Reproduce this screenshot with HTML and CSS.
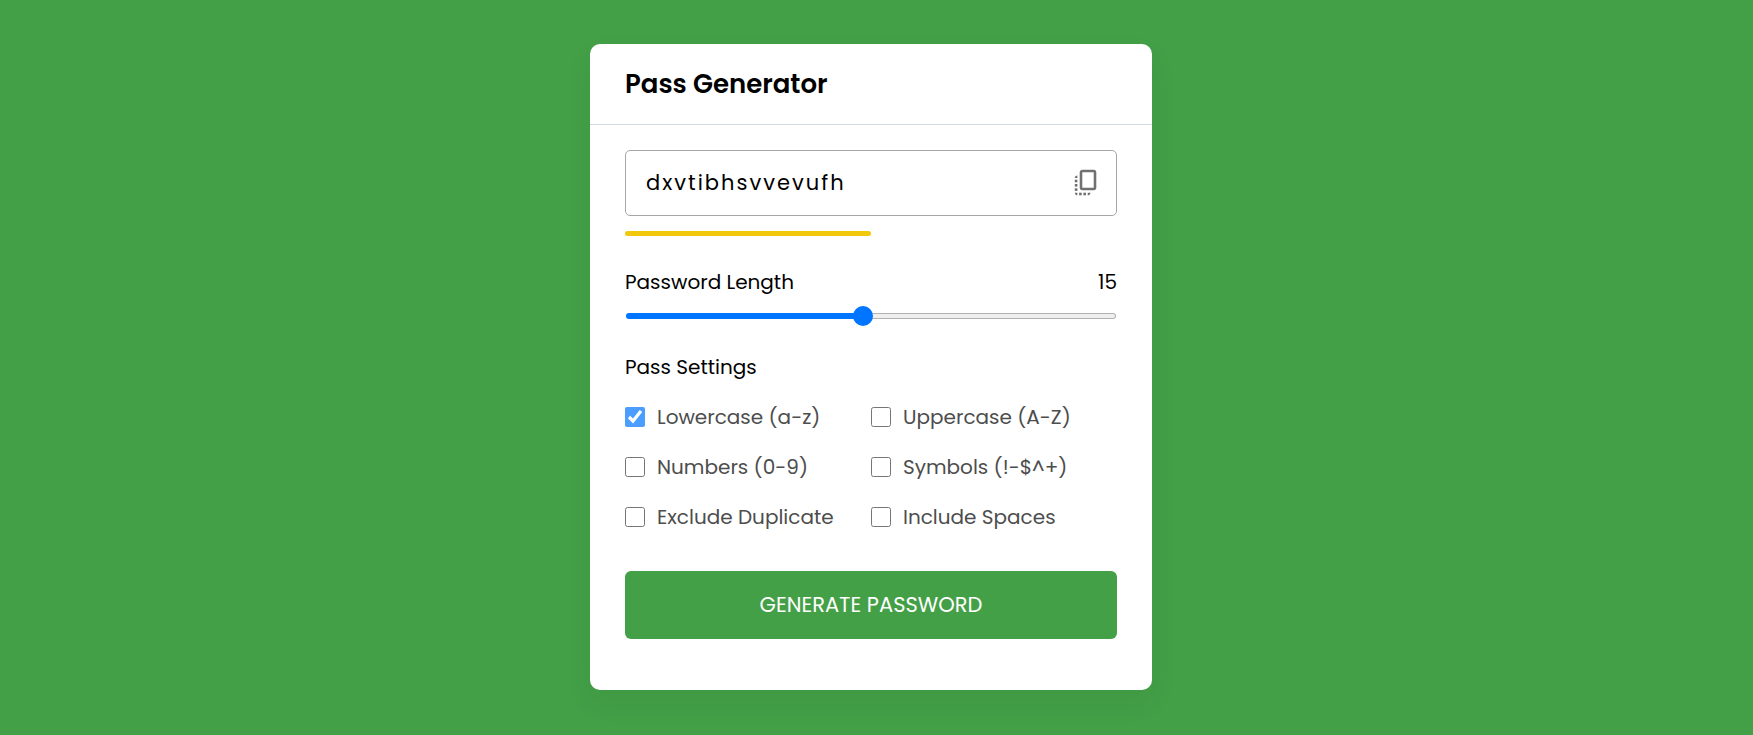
FILE: index.html
```html
<!DOCTYPE html>
<html lang="en">
<head>
<meta charset="utf-8">
<meta name="viewport" content="width=device-width, initial-scale=1">
<title>Pass Generator</title>
<link rel="stylesheet" href="styles.css">
</head>
<body>
<main class="container">
  <h1 class="title">Pass Generator</h1>
  <div class="wrapper">
    <div class="input-box">
      <input class="password" type="text" value="dxvtibhsvvevufh" aria-label="Generated password" readonly>
      <button class="copy" type="button" aria-label="Copy password">
        <svg class="copy-icon" viewBox="0 0 24 28" aria-hidden="true">
          <rect x="7" y="2" width="14" height="18" rx="1.4" fill="none" stroke="currentColor" stroke-width="2.6"/>
          <g fill="currentColor">
            <path d="M3.4 6.4v2.5H.8c0-1.4 1-2.5 2.6-2.5z"/>
            <rect x=".8" y="10.7" width="2.6" height="2.6"/>
            <rect x=".8" y="15" width="2.6" height="2.6"/>
            <rect x=".8" y="19.3" width="2.6" height="2.6"/>
            <path d="M.8 23.700h2.600v2.600C1.900 26.300.8 25.200.8 23.700z"/>
            <rect x="5.1" y="23.7" width="2.6" height="2.6"/>
            <rect x="9.4" y="23.7" width="2.6" height="2.6"/>
            <path d="M13.700 23.700h2.800c0 1.500-1.200 2.600-2.800 2.600z"/>
          </g>
        </svg>
      </button>
    </div>
    <div class="strength"><div class="strength-fill"></div></div>
    <div class="length">
      <div class="length-details">
        <label for="length">Password Length</label>
        <output for="length">15</output>
      </div>
      <input class="slider" id="length" type="range" min="1" max="30" value="15">
    </div>
    <section class="settings">
      <h2 class="settings-title">Pass Settings</h2>
      <ul class="options">
        <li class="option"><input class="check locked" type="checkbox" id="lowercase" checked><label for="lowercase">Lowercase (a-z)</label></li>
        <li class="option"><input class="check" type="checkbox" id="uppercase"><label for="uppercase">Uppercase (A-Z)</label></li>
        <li class="option"><input class="check" type="checkbox" id="numbers"><label for="numbers">Numbers (0-9)</label></li>
        <li class="option"><input class="check" type="checkbox" id="symbols"><label for="symbols">Symbols (!-$^+)</label></li>
        <li class="option"><input class="check" type="checkbox" id="duplicate"><label for="duplicate">Exclude Duplicate</label></li>
        <li class="option"><input class="check" type="checkbox" id="spaces"><label for="spaces">Include Spaces</label></li>
      </ul>
    </section>
    <button class="generate" type="button">GENERATE PASSWORD</button>
  </div>
</main>
</body>
</html>
```

FILE: styles.css
```css
* {
  box-sizing: border-box;
  margin: 0;
  padding: 0;
}

body {
  min-height: 100vh;
  padding: 0 11px 1px 0;
  display: flex;
  align-items: center;
  justify-content: center;
  background: #43a047;
  color: #000;
  font-family: Poppins, Inter, sans-serif;
  font-size: 20px;
  font-weight: 400;
  line-height: 30px;
}

.container {
  width: 100%;
  max-width: 562px;
  background: #fff;
  border-radius: 10px;
  box-shadow: 0 12px 30px rgba(0, 0, 0, 0.05);
}

.title {
  padding: 20px 35px;
  border-bottom: 1px solid #d1d8e6;
  font-size: 26px;
  font-weight: 600;
  line-height: 40px;
}

.wrapper {
  padding: 25px 35px 51px;
}

.input-box {
  display: flex;
  align-items: center;
  height: 66px;
  padding: 0 18px 0 20px;
  border: 1px solid #a6a6a6;
  border-radius: 5px;
}

.password {
  flex: 1;
  min-width: 0;
  border: 0;
  outline: 0;
  background: none;
  color: #000;
  font: 400 21px/30px Poppins, Inter, sans-serif;
  letter-spacing: 2px;
}

.copy {
  display: flex;
  border: 0;
  background: none;
  color: #707070;
  cursor: pointer;
}

.copy-icon {
  width: 24px;
  height: 28px;
}

.strength {
  height: 5px;
  margin-top: 15px;
}

.strength-fill {
  width: 50%;
  height: 100%;
  border-radius: 5px;
  background: #f1c80b;
}

.length {
  margin-top: 31px;
}

.length-details {
  display: flex;
  justify-content: space-between;
}

.slider {
  display: block;
  width: 100%;
  height: 20px;
  margin-top: 9px;
  padding: 0 1px;
  appearance: none;
  background: none;
}

.slider::-webkit-slider-runnable-track {
  height: 6px;
  border: 1px solid transparent;
  border-radius: 3px;
  background:
    linear-gradient(to right, #0075ff 48%, transparent 48%) border-box,
    linear-gradient(#efefef, #efefef) padding-box,
    linear-gradient(#b2b2b2, #b2b2b2) border-box;
}

.slider::-webkit-slider-thumb {
  width: 20px;
  height: 20px;
  margin-top: -8px;
  appearance: none;
  border-radius: 50%;
  background: #0075ff;
}

.settings {
  margin-top: 26px;
}

.settings-title {
  font-size: 20px;
  font-weight: 400;
  line-height: 30px;
}

.options {
  display: grid;
  grid-template-columns: 1fr 1fr;
  gap: 20px 0;
  margin-top: 20px;
  list-style: none;
}

.option {
  display: flex;
  align-items: center;
  gap: 12px;
  color: #4d4d4d;
}

.check {
  width: 20px;
  height: 20px;
}

.locked {
  opacity: 0.7;
  pointer-events: none;
}

.generate {
  width: 100%;
  height: 68px;
  margin-top: 39px;
  border: 0;
  border-radius: 6px;
  background: #43a047;
  color: #fff;
  font: 400 21px/30px Poppins, Inter, sans-serif;
  cursor: pointer;
}
```
